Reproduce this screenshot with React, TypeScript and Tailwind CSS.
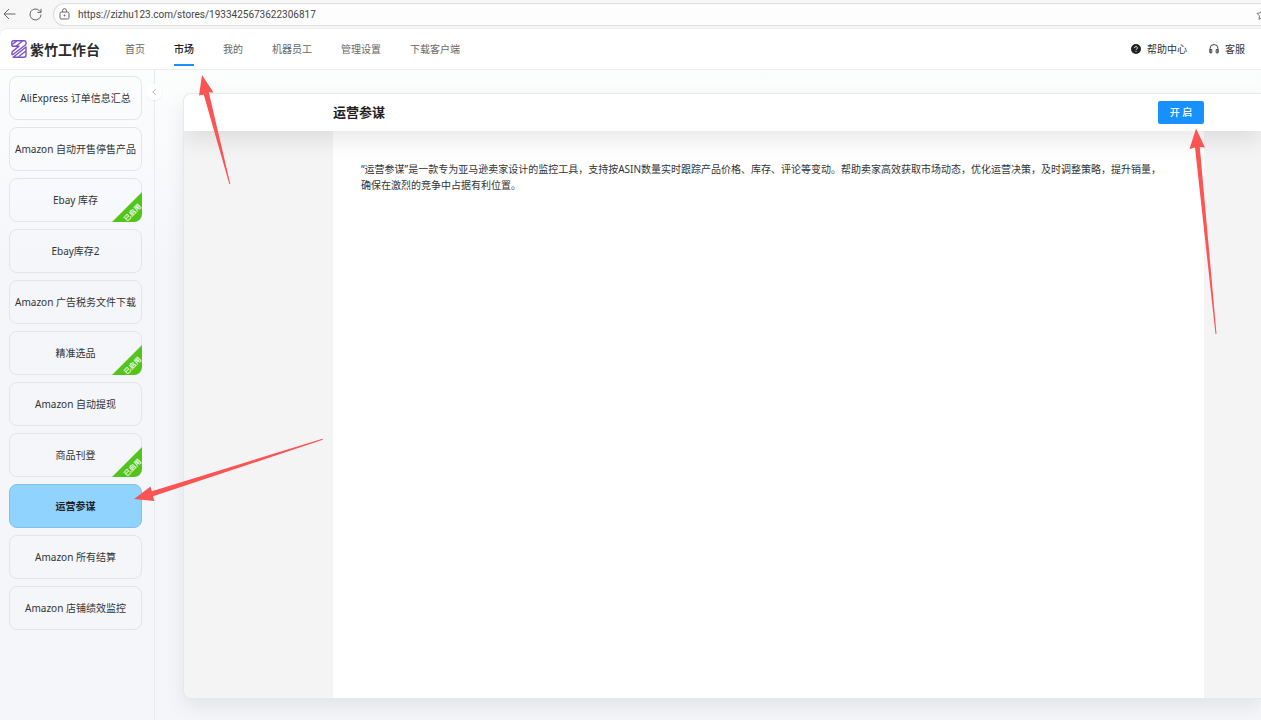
import React, { useState } from 'react';
import { ChevronLeft } from 'lucide-react';

interface StoreApp {
  name: string;
  enabled?: boolean;
}

const navItems = ['首页', '市场', '我的', '机器员工', '管理设置', '下载客户端'];

const storeApps: StoreApp[] = [
  { name: 'AliExpress 订单信息汇总' },
  { name: 'Amazon 自动开售停售产品' },
  { name: 'Ebay 库存', enabled: true },
  { name: 'Ebay库存2' },
  { name: 'Amazon 广告税务文件下载' },
  { name: '精准选品', enabled: true },
  { name: 'Amazon 自动提现' },
  { name: '商品刊登', enabled: true },
  { name: '运营参谋' },
  { name: 'Amazon 所有结算' },
  { name: 'Amazon 店铺绩效监控' },
];

const Logo: React.FC = () => (
  <svg width="16" height="18" viewBox="0 0 16 18" fill="none" stroke="#7c4fc9" strokeWidth="1.4" strokeLinejoin="round" aria-hidden="true">
    <path d="M2.500.8H13q2.200 0 2 2v.8q0 1-.9 1.700L2 14.500q-1 .8-1-.4v-1.300q0-1 .9-1.700L8 6.300H2.300Q.8 6.300.8 4.800V2.500Q.8.8 2.500.8Z" />
    <path d="M1.200 4.500 5.800.9M5 6.200 11.500 1" />
    <path d="M15 7v8q0 2.200-2.200 2.200H2.200Z" />
    <path d="M7.500 16.800 14.600 11.300" />
  </svg>
);

const BrowserBar: React.FC = () => (
  <div className="flex h-7 items-center bg-[#f7f7f7] text-[#555]">
    <button type="button" aria-label="Back" className="ml-[3px]">
      <svg width="13" height="12" viewBox="0 0 13 12" fill="none" stroke="#666">
        <path d="M12.500 6H1M6 1 1 6l5 5" />
      </svg>
    </button>
    <button type="button" aria-label="Refresh" className="ml-[13px]">
      <svg width="13" height="13" viewBox="0 0 13 13" fill="none" stroke="#666">
        <path d="M12 6.500A5.500 5.500 0 1 1 10.500 2.700L12 4.200M12 .8v3.600H8.400" />
      </svg>
    </button>
    <div className="ml-[11px] flex h-[23px] flex-1 items-center overflow-hidden rounded-l-full border border-r-0 border-[#dcdcdc] bg-[#fdfdfd] pl-[5px]">
      <svg width="11" height="12" viewBox="0 0 11 12" fill="none" stroke="#666" aria-hidden="true">
        <rect x="1" y="4" width="9" height="7" rx="1.500" />
        <path d="M3.500 4V2.700a2 2 0 0 1 4 0V4" />
        <circle cx="5.500" cy="7.500" r=".5" fill="#666" />
      </svg>
      <input
        type="text"
        aria-label="Address"
        defaultValue="https://zizhu123.com/stores/1933425673622306817"
        className="ml-2 min-w-0 flex-1 bg-transparent font-['Roboto',sans-serif] text-[10px] text-[#444] outline-none"
      />
      <svg width="5" height="11" viewBox="0 0 5 11" fill="none" stroke="#777" aria-hidden="true">
        <path d="M6 .8 4.500 3.800 1 4.300l2.500 2.600L3 10.300l3-1.500" />
      </svg>
    </div>
  </div>
);

const Header: React.FC = () => (
  <header className="flex h-[42px] items-center rounded-tl-lg border-y border-[#ececec] bg-white">
    <a href="#" className="ml-[11px] flex items-center gap-[3px] text-[14px] font-bold text-[#2b2b2b]">
      <Logo />
      紫竹工作台
    </a>
    <nav className="ml-[25px] flex h-full gap-[29px]">
      {navItems.map(item => (
        <a
          key={item}
          href="#"
          className={`flex h-[37px] items-center border-b-2 pt-1.5 text-[10px] ${
            item === '市场' ? 'border-[#1890ff] font-medium text-[#222]' : 'border-transparent text-[#666]'
          }`}
        >
          {item}
        </a>
      ))}
    </nav>
    <div className="ml-auto mr-4 flex gap-[22px] text-[10px] text-[#333]">
      <a href="#" className="flex items-center gap-1.5">
        <svg width="10" height="10" viewBox="0 0 10 10" fill="none" aria-hidden="true">
          <circle cx="5" cy="5" r="5" fill="#222" />
          <path d="M3.600 4a1.400 1.400 0 1 1 2.100 1.100Q5 5.400 5 6.100M5 7v.9" stroke="#fff" strokeWidth=".9" />
        </svg>
        帮助中心
      </a>
      <a href="#" className="flex items-center gap-1.5">
        <svg width="10" height="10" viewBox="0 0 10 10" fill="none" stroke="#333" strokeWidth=".9" aria-hidden="true">
          <path d="M1 8.500V4.500a4 4 0 0 1 8 0v4M1 5.500h1.800v3.400H1ZM9 5.500H7.200v3.400H9Z" />
        </svg>
        客服
      </a>
    </div>
  </header>
);

const EnabledBadge: React.FC = () => (
  <span className="absolute -bottom-px -right-px h-[30px] w-[30px]">
    <span className="absolute inset-0 rounded-br-lg bg-[#52c41a] [clip-path:polygon(100%_0,100%_100%,0_100%)]" />
    <span className="absolute bottom-0 right-0 flex h-5 w-5 items-center justify-center">
      <span className="-rotate-45 whitespace-nowrap text-[7px] font-medium leading-none text-white">已启用</span>
    </span>
  </span>
);

// Pointers drawn over the page, one polygon per step
const GuideArrows: React.FC = () => (
  <svg className="pointer-events-none absolute left-0 top-0 h-[720px] w-[1261px]" viewBox="0 0 1261 720" fill="#fc5353" aria-hidden="true">
    <path d="M202 75 213.500 92.500 208.800 92.200 230.300 184 229.300 184 203.700 94.500 199 95.500Z" />
    <path d="M134 499 150.500 486.500 151.800 491.300 322.500 438.800 322.800 439.800 153 496.200 154.500 501Z" />
    <path d="M1196 128.500 1205 147.500 1199.800 147 1216.500 334 1215.500 334 1195 147.500 1189.500 149Z" />
  </svg>
);

const App: React.FC = () => {
  const [selected, setSelected] = useState('运营参谋');

  return (
    <div className="relative flex h-screen flex-col overflow-hidden bg-[#f7f7f7] font-['Noto_Sans','Noto_Sans_CJK_SC',sans-serif]">
      <BrowserBar />
      <Header />
      <div className="flex min-h-0 flex-1 bg-linear-to-b from-[#fcfdfd] via-[#f4f6fa] via-30% to-[#f4f6fa]">
        <aside className="relative w-[155px] shrink-0 border-r border-[#e8eaed]">
          <div className="flex flex-col gap-[7px] pl-[9px] pr-3 pt-1.5">
            {storeApps.map(app => (
              <button
                key={app.name}
                type="button"
                onClick={() => setSelected(app.name)}
                className={`relative h-11 whitespace-nowrap rounded-lg border text-[10px] ${
                  selected === app.name
                    ? 'border-[#84bfe8] bg-[#91d3ff] font-bold text-[#222]'
                    : 'border-[#e4e5e8] text-[#333]'
                }`}
              >
                {app.name}
                {app.enabled && <EnabledBadge />}
              </button>
            ))}
          </div>
          <button
            type="button"
            aria-label="收起"
            className="absolute -right-2 top-3.5 flex h-4 w-4 items-center justify-center rounded-full bg-white text-[#999] shadow-xs"
          >
            <ChevronLeft size={10} />
          </button>
        </aside>

        <main className="flex min-w-0 flex-1 pb-[21px] pl-7 pt-[23px]">
          <section className="flex flex-1 flex-col overflow-hidden rounded-l-lg border border-r-0 border-[#e8e8e8] bg-[#f4f4f4] shadow-[0_8px_20px_rgba(0,0,0,0.08)]">
            <div className="relative bg-white pl-[149px] pr-[57px] shadow-[0_8px_24px_rgba(0,0,0,0.1)]">
              <div className="flex h-[37px] items-center justify-between">
                <h1 className="text-[13px] font-bold text-[#222]">运营参谋</h1>
                <button type="button" className="h-[23px] w-[46px] rounded-xs bg-[#1890ff] text-[10px] font-medium text-white">
                  开 启
                </button>
              </div>
            </div>
            <div className="flex flex-1 pl-[149px] pr-[57px]">
              <div className="flex-1 bg-white pl-7 pr-10 pt-[30px]">
                <p className="text-[10px] leading-4 text-[#333]">
                  “运营参谋”是一款专为亚马逊卖家设计的监控工具，支持按ASIN数量实时跟踪产品价格、库存、评论等变动。帮助卖家高效获取市场动态，优化运营决策，及时调整策略，提升销量，确保在激烈的竞争中占据有利位置。
                </p>
              </div>
            </div>
          </section>
        </main>
      </div>
      <GuideArrows />
    </div>
  );
};

export default App;
